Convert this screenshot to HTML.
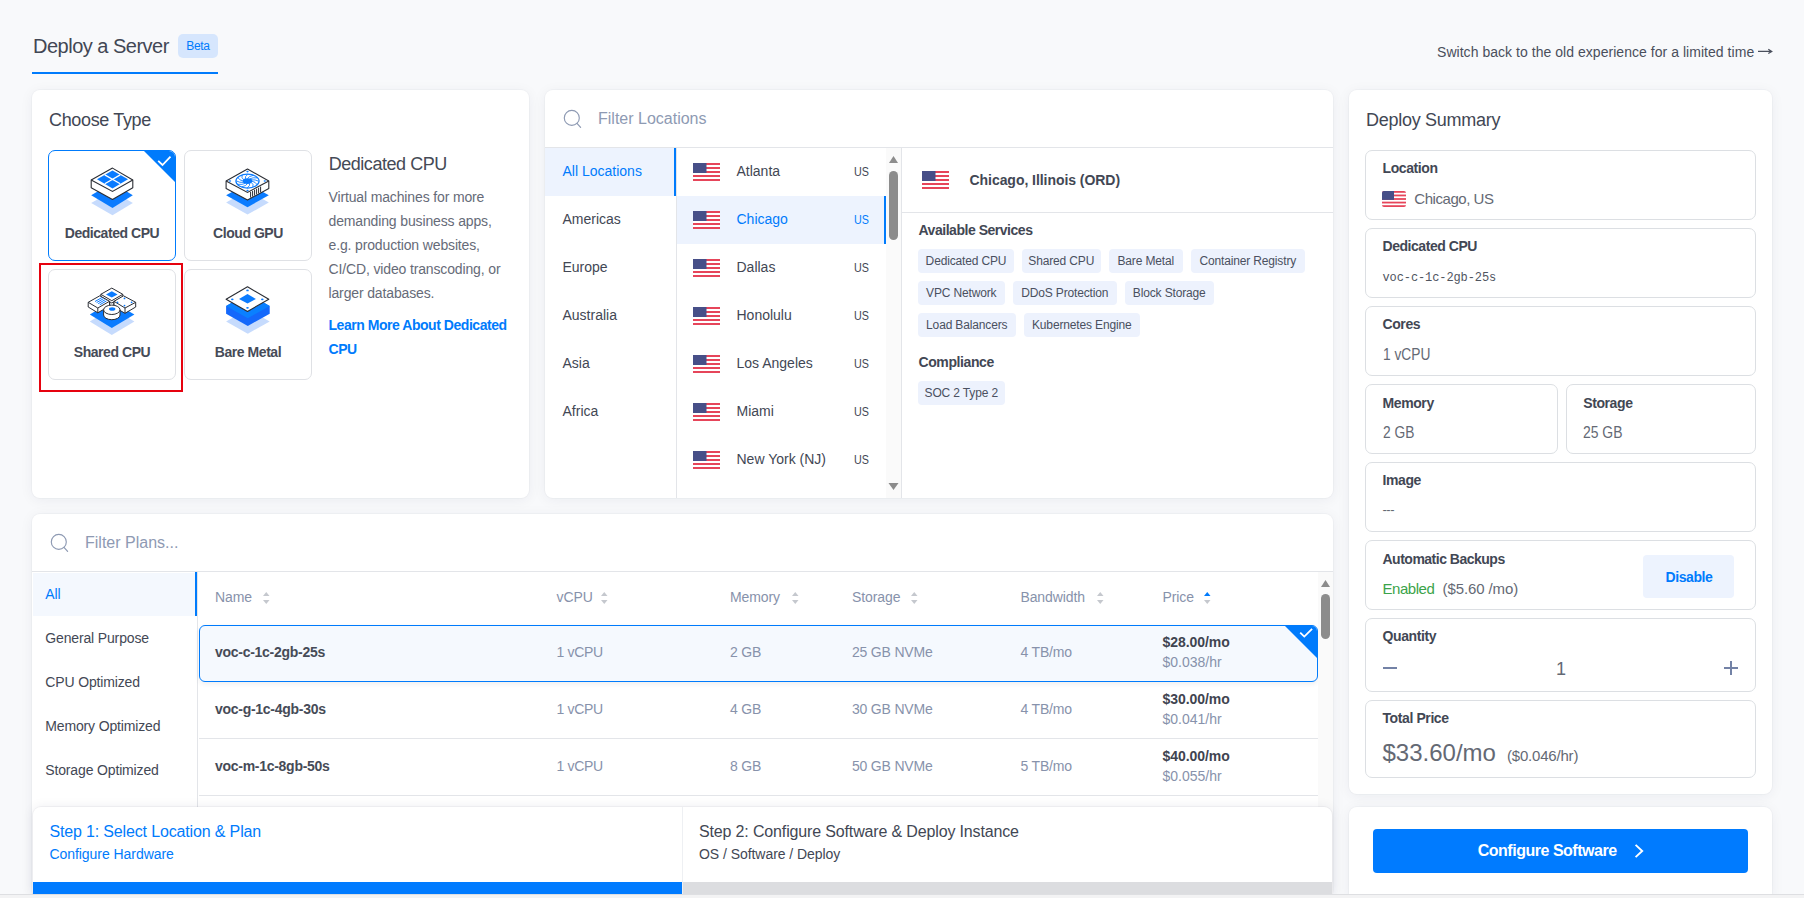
<!DOCTYPE html>
<html><head><meta charset="utf-8"><style>
html,body{margin:0;padding:0;}
body{width:1804px;height:898px;overflow:hidden;position:relative;background:#f8f9fb;font-family:"Liberation Sans",sans-serif;}
.t{position:absolute;white-space:nowrap;}
.r{position:absolute;box-sizing:border-box;}
svg{position:absolute;overflow:visible;}
</style></head><body>
<div class="t" style="left:33px;top:36.07px;font-size:20px;line-height:20px;color:#424754;letter-spacing:-0.5px;">Deploy a Server</div>
<div class="r" style="left:178px;top:34px;width:40px;height:24px;background:#d6e6fd;border-radius:5px"></div>
<div class="t" style="left:186.2px;top:39.64px;font-size:12px;line-height:12px;color:#007bfc;letter-spacing:-0.3px;">Beta</div>
<div class="r" style="left:32px;top:72px;width:186px;height:2px;background:#007bfc"></div>
<div class="t" style="left:1437px;top:45.15px;font-size:14px;line-height:14px;color:#4a4f5c;letter-spacing:0.04px;">Switch back to the old experience for a limited time</div>
<svg style="left:1756px;top:46px" width="18" height="10" viewBox="0 0 18 10"><path d="M2,5.4 L15.6,5.4 M12.3,3.2 L15.8,5.4 L12.3,7.6" fill="none" stroke="#4a4f5c" stroke-width="1.2"/></svg>
<div class="r" style="left:32px;top:90px;width:497px;height:408px;background:#fff;border-radius:8px;box-shadow:0 0 0 1px rgba(20,30,60,0.025),0 2px 14px rgba(20,30,60,0.06)"></div>
<div class="r" style="left:545px;top:90px;width:788px;height:408px;background:#fff;border-radius:8px;box-shadow:0 0 0 1px rgba(20,30,60,0.025),0 2px 14px rgba(20,30,60,0.06)"></div>
<div class="r" style="left:1349px;top:90px;width:423px;height:704px;background:#fff;border-radius:8px;box-shadow:0 0 0 1px rgba(20,30,60,0.025),0 2px 14px rgba(20,30,60,0.06)"></div>
<div class="r" style="left:32px;top:514px;width:1301px;height:384px;background:#fff;border-radius:8px;box-shadow:0 0 0 1px rgba(20,30,60,0.025),0 2px 14px rgba(20,30,60,0.06)"></div>
<div class="t" style="left:49px;top:111.16px;font-size:18px;line-height:18px;color:#424754;letter-spacing:-0.35px;">Choose Type</div>
<div class="r" style="left:48px;top:150px;width:128px;height:111px;border:1px solid #007bfc;border-radius:7px;overflow:hidden;background:#fff"><svg style="left:94px;top:-1px" width="34" height="34" viewBox="0 0 34 34"><polygon points="0,0 34,0 34,34" fill="#007bfc"/><path d="M15.2,10.9 L19.5,15 L27.5,6.6" fill="none" stroke="#fff" stroke-width="1.8"/></svg></div>
<div class="r" style="left:184px;top:150px;width:128px;height:111px;border:1px solid #dfe1e5;border-radius:7px;background:#fff"></div>
<div class="r" style="left:48px;top:269px;width:128px;height:111px;border:1px solid #dfe1e5;border-radius:7px;background:#fff"></div>
<div class="r" style="left:184px;top:269px;width:128px;height:111px;border:1px solid #dfe1e5;border-radius:7px;background:#fff"></div>
<div class="r" style="left:39px;top:263px;width:144px;height:129px;border:2px solid #e6020f"></div>
<svg style="left:86px;top:162px" width="56" height="58" viewBox="0 0 56 58">
<polygon points="5.2,41 26.5,28.7 46.8,41 26.5,53.3" fill="#c6dbfd"/>
<polygon points="5.2,33.3 26.5,20.7 46.8,33.3 26.5,45.9" fill="#0a7bff"/>
<path d="M5.2,18 L26.5,6.1 L46.8,18 L46.8,25.7 L26.5,37.4 L5.2,25.7 Z" fill="#fff" stroke="#2b2e35" stroke-width="1.1" stroke-linejoin="round"/>
<path d="M5.2,18 L26.5,29.4 L46.8,18" fill="none" stroke="#2b2e35" stroke-width="1.1"/>
<polygon points="26.5,8.6 42,17.2 26.5,26.4 11,17.2" fill="#0a7bff"/>
<path d="M18.75,12.9 L34.25,21.8 M34.25,12.9 L18.75,21.8" stroke="#fff" stroke-width="1.3"/>
</svg>
<svg style="left:222px;top:162px" width="56" height="58" viewBox="0 0 56 58">
<polygon points="4.1,40.4 25.5,28.2 46.8,40.4 25.5,52.6" fill="#c6dbfd"/>
<polygon points="4.1,33.3 25.5,21.4 46.8,33.3 25.5,45.2" fill="#0a7bff"/>
<path d="M4.1,19 L25.5,7.1 L46.8,19 L46.8,26.5 L25.5,38.1 L4.1,26.5 Z" fill="#fff" stroke="#2b2e35" stroke-width="1.1" stroke-linejoin="round"/>
<path d="M4.1,19 L25.5,30.4 L46.8,19" fill="none" stroke="#2b2e35" stroke-width="1.1"/>
<path d="M28.6,29.9 L28.6,35.6 M30.6,28.9 L30.6,34.6 M32.6,27.8 L32.6,33.5 M34.6,26.7 L34.6,32.4 M36.6,25.7 L36.6,31.4 M38.6,24.6 L38.6,30.3 " stroke="#2b2e35" stroke-width="1"/>
<ellipse cx="25.5" cy="19.1" rx="11.6" ry="7" fill="none" stroke="#0a7bff" stroke-width="1.2"/><path d="M29.70,19.10 Q33.61,19.83 35.13,22.65 M29.14,20.35 Q31.91,22.16 30.89,25.08 M27.60,21.27 Q28.49,23.66 25.20,25.90 M25.50,21.60 Q24.27,23.94 19.59,24.90 M23.40,21.27 Q20.38,22.93 15.57,22.34 M21.86,20.35 Q17.87,20.89 14.20,18.92 M21.30,19.10 Q17.39,18.37 15.87,15.55 M21.86,17.85 Q19.09,16.04 20.11,13.12 M23.40,16.93 Q22.51,14.54 25.80,12.30 M25.50,16.60 Q26.73,14.26 31.41,13.30 M27.60,16.93 Q30.62,15.27 35.43,15.86 M29.14,17.85 Q33.13,17.31 36.80,19.28 " fill="none" stroke="#0a7bff" stroke-width="0.85"/><ellipse cx="25.5" cy="19.1" rx="4.8" ry="2.8" fill="#0a7bff"/>
<ellipse cx="25.5" cy="9.6" rx="1.2" ry="0.8" fill="#0a7bff"/>
<ellipse cx="8" cy="19" rx="1.2" ry="0.8" fill="#0a7bff"/>
<ellipse cx="42.8" cy="19" rx="1.2" ry="0.8" fill="#0a7bff"/>
<ellipse cx="25.5" cy="28.6" rx="1.2" ry="0.8" fill="#0a7bff"/>
</svg>
<svg style="left:84px;top:282px" width="56" height="58" viewBox="0 0 56 58">
<polygon points="5.8,39.4 27.8,26 50.4,39.4 27.8,53" fill="#c6dbfd"/>
<polygon points="5.8,32.6 27.8,19.3 50.4,32.6 27.8,45.9" fill="#0a7bff"/>
<polygon points="22,17 34,17 36,26 20,26" fill="#fff"/>
<path d="M25.8,19.5 L25.8,23.5 M29.8,19.5 L29.8,23.5" stroke="#2b2e35" stroke-width="0.9"/>
<path d="M16.8,12.3 L27.8,6.1 L38.8,12.3 L38.8,14.6 L27.8,21 L16.8,14.6 Z" fill="#fff" stroke="#2b2e35" stroke-width="1"/>
<path d="M16.8,12.3 L27.8,18.7 L38.8,12.3" fill="none" stroke="#2b2e35" stroke-width="1"/>
<polygon points="27.8,9.2 33.6,12.4 27.8,15.6 22,12.4" fill="#0a7bff"/>
<path d="M4.2,20.3 L15.8,13.8 L25.5,19.3 L25.5,24 L13.8,30.8 L4.2,25 Z" fill="#fff" stroke="#2b2e35" stroke-width="1"/>
<path d="M4.2,20.3 L13.8,26 L25.5,19.3 M13.8,26 L13.8,30.8" fill="none" stroke="#2b2e35" stroke-width="1"/>
<path d="M11,19.5 L18,15.5 M12.6,20.6 L19.6,16.6 M14.2,21.7 L21.2,17.7 M15.8,22.8 L22.6,18.8" stroke="#0a7bff" stroke-width="1"/>
<path d="M30,19.3 L39.5,13.8 L51.7,20.3 L51.7,25 L41,31.3 L30,25 Z" fill="#fff" stroke="#2b2e35" stroke-width="1"/>
<path d="M30,19.3 L41,26 L51.7,20.3 M41,26 L41,31.3" fill="none" stroke="#2b2e35" stroke-width="1"/>
<circle cx="40.5" cy="16.4" r="0.9" fill="#0a7bff"/><circle cx="33.5" cy="20.3" r="0.9" fill="#0a7bff"/><circle cx="47.6" cy="20.3" r="0.9" fill="#0a7bff"/><circle cx="40.5" cy="23.6" r="0.9" fill="#0a7bff"/>
<path d="M19.6,27.8 L19.6,33 A8.2,4.7 0 0 0 36,33 L36,27.8" fill="#fff" stroke="#2b2e35" stroke-width="1"/>
<ellipse cx="27.8" cy="27.8" rx="8.2" ry="4.7" fill="#fff" stroke="#2b2e35" stroke-width="1"/>
<ellipse cx="28.2" cy="27" rx="3.2" ry="1.8" fill="#0a7bff"/>
</svg>
<svg style="left:220px;top:282px" width="56" height="58" viewBox="0 0 56 58">
<polygon points="6.1,39.4 27.8,27 49.7,39.4 27.8,51.7" fill="#c6dbfd"/>
<polygon points="6.1,23.9 27.8,11.6 49.7,23.9 49.7,31.7 27.8,43.9 6.1,31.7" fill="#1468fb"/>
<polygon points="6.1,23.9 27.8,11.6 49.7,23.9 27.8,36.2" fill="#0a80ff"/>
<polygon points="27.5,4.8 48.8,17.3 27.5,29.4 6.1,17.3" fill="#fff" stroke="#2b2e35" stroke-width="1.1" stroke-linejoin="round"/>
<polygon points="27.5,11.9 35.9,16.9 27.5,21.4 19,16.9" fill="#0a7bff"/>
<ellipse cx="27.5" cy="8.4" rx="1.3" ry="0.9" fill="#0a7bff"/>
<ellipse cx="12.3" cy="17.3" rx="1.3" ry="0.9" fill="#0a7bff"/>
<ellipse cx="42.3" cy="17.3" rx="1.3" ry="0.9" fill="#0a7bff"/>
<ellipse cx="27.5" cy="25.8" rx="1.3" ry="0.9" fill="#0a7bff"/>
</svg>
<div class="t" style="left:12px;width:200px;text-align:center;top:225.85px;font-size:14px;line-height:14px;color:#464b57;font-weight:700;letter-spacing:-0.45px">Dedicated CPU</div>
<div class="t" style="left:148px;width:200px;text-align:center;top:225.85px;font-size:14px;line-height:14px;color:#464b57;font-weight:700;letter-spacing:-0.45px">Cloud GPU</div>
<div class="t" style="left:12px;width:200px;text-align:center;top:344.55px;font-size:14px;line-height:14px;color:#464b57;font-weight:700;letter-spacing:-0.45px">Shared CPU</div>
<div class="t" style="left:148px;width:200px;text-align:center;top:344.55px;font-size:14px;line-height:14px;color:#464b57;font-weight:700;letter-spacing:-0.45px">Bare Metal</div>
<div class="t" style="left:328.7px;top:155.16px;font-size:18px;line-height:18px;color:#454a56;letter-spacing:-0.46px;">Dedicated CPU</div>
<div class="t" style="left:328.5px;top:190.15px;font-size:14px;line-height:14px;color:#666b78;letter-spacing:-0.14px;">Virtual machines for more</div>
<div class="t" style="left:328.5px;top:214.15px;font-size:14px;line-height:14px;color:#666b78;letter-spacing:-0.14px;">demanding business apps,</div>
<div class="t" style="left:328.5px;top:238.15px;font-size:14px;line-height:14px;color:#666b78;letter-spacing:-0.14px;">e.g. production websites,</div>
<div class="t" style="left:328.5px;top:262.15px;font-size:14px;line-height:14px;color:#666b78;letter-spacing:-0.14px;">CI/CD, video transcoding, or</div>
<div class="t" style="left:328.5px;top:286.15px;font-size:14px;line-height:14px;color:#666b78;letter-spacing:-0.14px;">larger databases.</div>
<div class="t" style="left:328.5px;top:318.15px;font-size:14px;line-height:14px;color:#007bfc;font-weight:700;letter-spacing:-0.46px;">Learn More About Dedicated</div>
<div class="t" style="left:328.5px;top:342.15px;font-size:14px;line-height:14px;color:#007bfc;font-weight:700;letter-spacing:-0.46px;">CPU</div>
<svg style="left:563.5px;top:110px" width="20" height="20" viewBox="0 0 20 20"><circle cx="7.8" cy="7.9" r="7.5" fill="none" stroke="#8e9ab3" stroke-width="1.15"/><path d="M13,13.4 L16.6,17.4" stroke="#8e9ab3" stroke-width="1.2" stroke-linecap="round"/></svg>
<div class="t" style="left:598px;top:111.26px;font-size:16px;line-height:16px;color:#8e9ab3;">Filter Locations</div>
<div class="r" style="left:545px;top:147px;width:788px;height:1px;background:#e3e5e9"></div>
<div class="r" style="left:545px;top:148px;width:131px;height:48px;background:#edf3fe"></div>
<div class="r" style="left:674px;top:148px;width:2px;height:48px;background:#007bfc"></div>
<div class="r" style="left:676px;top:148px;width:1px;height:350px;background:#e3e5e9"></div>
<div class="t" style="left:562.5px;top:164.15px;font-size:14px;line-height:14px;color:#007bfc;">All Locations</div>
<div class="t" style="left:562.5px;top:212.15px;font-size:14px;line-height:14px;color:#424754;">Americas</div>
<div class="t" style="left:562.5px;top:260.15px;font-size:14px;line-height:14px;color:#424754;">Europe</div>
<div class="t" style="left:562.5px;top:308.15px;font-size:14px;line-height:14px;color:#424754;">Australia</div>
<div class="t" style="left:562.5px;top:356.15px;font-size:14px;line-height:14px;color:#424754;">Asia</div>
<div class="t" style="left:562.5px;top:404.15px;font-size:14px;line-height:14px;color:#424754;">Africa</div>
<div class="r" style="left:677px;top:196px;width:207px;height:48px;background:#edf3fe"></div>
<div class="r" style="left:884px;top:196px;width:2px;height:48px;background:#007bfc"></div>
<svg style="left:693px;top:163px" width="27" height="18" viewBox="0 0 27 18"><defs><clipPath id="fc693_163"><rect width="27" height="18" rx="0"/></clipPath></defs><g clip-path="url(#fc693_163)"><rect width="27" height="18" fill="#fff"/><rect x="0" y="0.00" width="27" height="2.00" fill="#e6455a"/><rect x="0" y="4.00" width="27" height="2.00" fill="#e6455a"/><rect x="0" y="8.00" width="27" height="2.00" fill="#e6455a"/><rect x="0" y="12.00" width="27" height="2.00" fill="#e6455a"/><rect x="0" y="16.00" width="27" height="2.00" fill="#e6455a"/><rect x="0" y="0" width="13.50" height="10.00" fill="#474f88"/></g></svg>
<div class="t" style="left:736.5px;top:164.15px;font-size:14px;line-height:14px;color:#424754;">Atlanta</div>
<div class="t" style="left:853.5px;top:166.22px;font-size:12.5px;line-height:12.5px;color:#424754;transform:scaleX(0.86);transform-origin:0 0;">US</div>
<svg style="left:693px;top:211px" width="27" height="18" viewBox="0 0 27 18"><defs><clipPath id="fc693_211"><rect width="27" height="18" rx="0"/></clipPath></defs><g clip-path="url(#fc693_211)"><rect width="27" height="18" fill="#fff"/><rect x="0" y="0.00" width="27" height="2.00" fill="#e6455a"/><rect x="0" y="4.00" width="27" height="2.00" fill="#e6455a"/><rect x="0" y="8.00" width="27" height="2.00" fill="#e6455a"/><rect x="0" y="12.00" width="27" height="2.00" fill="#e6455a"/><rect x="0" y="16.00" width="27" height="2.00" fill="#e6455a"/><rect x="0" y="0" width="13.50" height="10.00" fill="#474f88"/></g></svg>
<div class="t" style="left:736.5px;top:212.15px;font-size:14px;line-height:14px;color:#007bfc;">Chicago</div>
<div class="t" style="left:853.5px;top:214.22px;font-size:12.5px;line-height:12.5px;color:#007bfc;transform:scaleX(0.86);transform-origin:0 0;">US</div>
<svg style="left:693px;top:259px" width="27" height="18" viewBox="0 0 27 18"><defs><clipPath id="fc693_259"><rect width="27" height="18" rx="0"/></clipPath></defs><g clip-path="url(#fc693_259)"><rect width="27" height="18" fill="#fff"/><rect x="0" y="0.00" width="27" height="2.00" fill="#e6455a"/><rect x="0" y="4.00" width="27" height="2.00" fill="#e6455a"/><rect x="0" y="8.00" width="27" height="2.00" fill="#e6455a"/><rect x="0" y="12.00" width="27" height="2.00" fill="#e6455a"/><rect x="0" y="16.00" width="27" height="2.00" fill="#e6455a"/><rect x="0" y="0" width="13.50" height="10.00" fill="#474f88"/></g></svg>
<div class="t" style="left:736.5px;top:260.15px;font-size:14px;line-height:14px;color:#424754;">Dallas</div>
<div class="t" style="left:853.5px;top:262.22px;font-size:12.5px;line-height:12.5px;color:#424754;transform:scaleX(0.86);transform-origin:0 0;">US</div>
<svg style="left:693px;top:307px" width="27" height="18" viewBox="0 0 27 18"><defs><clipPath id="fc693_307"><rect width="27" height="18" rx="0"/></clipPath></defs><g clip-path="url(#fc693_307)"><rect width="27" height="18" fill="#fff"/><rect x="0" y="0.00" width="27" height="2.00" fill="#e6455a"/><rect x="0" y="4.00" width="27" height="2.00" fill="#e6455a"/><rect x="0" y="8.00" width="27" height="2.00" fill="#e6455a"/><rect x="0" y="12.00" width="27" height="2.00" fill="#e6455a"/><rect x="0" y="16.00" width="27" height="2.00" fill="#e6455a"/><rect x="0" y="0" width="13.50" height="10.00" fill="#474f88"/></g></svg>
<div class="t" style="left:736.5px;top:308.15px;font-size:14px;line-height:14px;color:#424754;">Honolulu</div>
<div class="t" style="left:853.5px;top:310.22px;font-size:12.5px;line-height:12.5px;color:#424754;transform:scaleX(0.86);transform-origin:0 0;">US</div>
<svg style="left:693px;top:355px" width="27" height="18" viewBox="0 0 27 18"><defs><clipPath id="fc693_355"><rect width="27" height="18" rx="0"/></clipPath></defs><g clip-path="url(#fc693_355)"><rect width="27" height="18" fill="#fff"/><rect x="0" y="0.00" width="27" height="2.00" fill="#e6455a"/><rect x="0" y="4.00" width="27" height="2.00" fill="#e6455a"/><rect x="0" y="8.00" width="27" height="2.00" fill="#e6455a"/><rect x="0" y="12.00" width="27" height="2.00" fill="#e6455a"/><rect x="0" y="16.00" width="27" height="2.00" fill="#e6455a"/><rect x="0" y="0" width="13.50" height="10.00" fill="#474f88"/></g></svg>
<div class="t" style="left:736.5px;top:356.15px;font-size:14px;line-height:14px;color:#424754;">Los Angeles</div>
<div class="t" style="left:853.5px;top:358.22px;font-size:12.5px;line-height:12.5px;color:#424754;transform:scaleX(0.86);transform-origin:0 0;">US</div>
<svg style="left:693px;top:403px" width="27" height="18" viewBox="0 0 27 18"><defs><clipPath id="fc693_403"><rect width="27" height="18" rx="0"/></clipPath></defs><g clip-path="url(#fc693_403)"><rect width="27" height="18" fill="#fff"/><rect x="0" y="0.00" width="27" height="2.00" fill="#e6455a"/><rect x="0" y="4.00" width="27" height="2.00" fill="#e6455a"/><rect x="0" y="8.00" width="27" height="2.00" fill="#e6455a"/><rect x="0" y="12.00" width="27" height="2.00" fill="#e6455a"/><rect x="0" y="16.00" width="27" height="2.00" fill="#e6455a"/><rect x="0" y="0" width="13.50" height="10.00" fill="#474f88"/></g></svg>
<div class="t" style="left:736.5px;top:404.15px;font-size:14px;line-height:14px;color:#424754;">Miami</div>
<div class="t" style="left:853.5px;top:406.22px;font-size:12.5px;line-height:12.5px;color:#424754;transform:scaleX(0.86);transform-origin:0 0;">US</div>
<svg style="left:693px;top:451px" width="27" height="18" viewBox="0 0 27 18"><defs><clipPath id="fc693_451"><rect width="27" height="18" rx="0"/></clipPath></defs><g clip-path="url(#fc693_451)"><rect width="27" height="18" fill="#fff"/><rect x="0" y="0.00" width="27" height="2.00" fill="#e6455a"/><rect x="0" y="4.00" width="27" height="2.00" fill="#e6455a"/><rect x="0" y="8.00" width="27" height="2.00" fill="#e6455a"/><rect x="0" y="12.00" width="27" height="2.00" fill="#e6455a"/><rect x="0" y="16.00" width="27" height="2.00" fill="#e6455a"/><rect x="0" y="0" width="13.50" height="10.00" fill="#474f88"/></g></svg>
<div class="t" style="left:736.5px;top:452.15px;font-size:14px;line-height:14px;color:#424754;">New York (NJ)</div>
<div class="t" style="left:853.5px;top:454.22px;font-size:12.5px;line-height:12.5px;color:#424754;transform:scaleX(0.86);transform-origin:0 0;">US</div>
<div class="r" style="left:886px;top:148px;width:15px;height:350px;background:#fafafa"></div>
<svg style="left:886px;top:150px" width="15" height="348" viewBox="0 0 15 348"><polygon points="3,13 12,13 7.5,6" fill="#8c8c8c"/><rect x="3" y="21" width="9" height="69" rx="4.5" fill="#8c8c8c"/><polygon points="2.5,333 12.5,333 7.5,340" fill="#8c8c8c"/></svg>
<div class="r" style="left:901px;top:148px;width:1px;height:350px;background:#e3e5e9"></div>
<svg style="left:922px;top:171px" width="27" height="18" viewBox="0 0 27 18"><defs><clipPath id="fc922_171"><rect width="27" height="18" rx="0"/></clipPath></defs><g clip-path="url(#fc922_171)"><rect width="27" height="18" fill="#fff"/><rect x="0" y="0.00" width="27" height="2.00" fill="#e6455a"/><rect x="0" y="4.00" width="27" height="2.00" fill="#e6455a"/><rect x="0" y="8.00" width="27" height="2.00" fill="#e6455a"/><rect x="0" y="12.00" width="27" height="2.00" fill="#e6455a"/><rect x="0" y="16.00" width="27" height="2.00" fill="#e6455a"/><rect x="0" y="0" width="13.50" height="10.00" fill="#474f88"/></g></svg>
<div class="t" style="left:969.5px;top:173.15px;font-size:14px;line-height:14px;color:#424754;font-weight:700;letter-spacing:-0.05px;">Chicago, Illinois (ORD)</div>
<div class="r" style="left:902px;top:212px;width:431px;height:1px;background:#e3e5e9"></div>
<div class="t" style="left:918.5px;top:222.85px;font-size:14px;line-height:14px;color:#424754;font-weight:700;letter-spacing:-0.47px;">Available Services</div>
<div class="r" style="left:918px;top:249px;width:96px;height:24px;background:#edf2fd;border-radius:4px"></div>
<div class="t" style="left:918px;width:96px;text-align:center;top:255.34px;font-size:12px;line-height:12px;color:#4a5060;letter-spacing:-0.15px">Dedicated CPU</div>
<div class="r" style="left:1022px;top:249px;width:78.5px;height:24px;background:#edf2fd;border-radius:4px"></div>
<div class="t" style="left:1022px;width:78.5px;text-align:center;top:255.34px;font-size:12px;line-height:12px;color:#4a5060;letter-spacing:-0.15px">Shared CPU</div>
<div class="r" style="left:1109px;top:249px;width:73.5px;height:24px;background:#edf2fd;border-radius:4px"></div>
<div class="t" style="left:1109px;width:73.5px;text-align:center;top:255.34px;font-size:12px;line-height:12px;color:#4a5060;letter-spacing:-0.15px">Bare Metal</div>
<div class="r" style="left:1191px;top:249px;width:113.5px;height:24px;background:#edf2fd;border-radius:4px"></div>
<div class="t" style="left:1191px;width:113.5px;text-align:center;top:255.34px;font-size:12px;line-height:12px;color:#4a5060;letter-spacing:-0.15px">Container Registry</div>
<div class="r" style="left:918px;top:281px;width:86.5px;height:24px;background:#edf2fd;border-radius:4px"></div>
<div class="t" style="left:918px;width:86.5px;text-align:center;top:287.34px;font-size:12px;line-height:12px;color:#4a5060;letter-spacing:-0.15px">VPC Network</div>
<div class="r" style="left:1013px;top:281px;width:103.5px;height:24px;background:#edf2fd;border-radius:4px"></div>
<div class="t" style="left:1013px;width:103.5px;text-align:center;top:287.34px;font-size:12px;line-height:12px;color:#4a5060;letter-spacing:-0.15px">DDoS Protection</div>
<div class="r" style="left:1125px;top:281px;width:88.5px;height:24px;background:#edf2fd;border-radius:4px"></div>
<div class="t" style="left:1125px;width:88.5px;text-align:center;top:287.34px;font-size:12px;line-height:12px;color:#4a5060;letter-spacing:-0.15px">Block Storage</div>
<div class="r" style="left:918px;top:313px;width:97.5px;height:24px;background:#edf2fd;border-radius:4px"></div>
<div class="t" style="left:918px;width:97.5px;text-align:center;top:319.34px;font-size:12px;line-height:12px;color:#4a5060;letter-spacing:-0.15px">Load Balancers</div>
<div class="r" style="left:1024px;top:313px;width:115.5px;height:24px;background:#edf2fd;border-radius:4px"></div>
<div class="t" style="left:1024px;width:115.5px;text-align:center;top:319.34px;font-size:12px;line-height:12px;color:#4a5060;letter-spacing:-0.15px">Kubernetes Engine</div>
<div class="t" style="left:918.5px;top:354.95px;font-size:14px;line-height:14px;color:#424754;font-weight:700;letter-spacing:-0.4px;">Compliance</div>
<div class="r" style="left:918px;top:381px;width:86.5px;height:24px;background:#edf2fd;border-radius:4px"></div>
<div class="t" style="left:918px;width:86.5px;text-align:center;top:387.34px;font-size:12px;line-height:12px;color:#4a5060;letter-spacing:-0.15px">SOC 2 Type 2</div>
<div class="t" style="left:1366px;top:110.76px;font-size:18px;line-height:18px;color:#424754;letter-spacing:-0.28px;">Deploy Summary</div>
<div class="r" style="left:1365px;top:150px;width:391px;height:70px;border:1px solid #dcdfe3;border-radius:7px;background:#fff"></div>
<div class="t" style="left:1382.5px;top:160.85px;font-size:14px;line-height:14px;color:#424754;font-weight:700;letter-spacing:-0.4px;">Location</div>
<svg style="left:1382px;top:191px" width="24" height="16" viewBox="0 0 24 16"><defs><clipPath id="fc1382_191"><rect width="24" height="16" rx="2"/></clipPath></defs><g clip-path="url(#fc1382_191)"><rect width="24" height="16" fill="#fff"/><rect x="0" y="0.00" width="24" height="1.78" fill="#e6455a"/><rect x="0" y="3.56" width="24" height="1.78" fill="#e6455a"/><rect x="0" y="7.11" width="24" height="1.78" fill="#e6455a"/><rect x="0" y="10.67" width="24" height="1.78" fill="#e6455a"/><rect x="0" y="14.22" width="24" height="1.78" fill="#e6455a"/><rect x="0" y="0" width="12.00" height="8.89" fill="#474f88"/></g></svg>
<div class="t" style="left:1414.3px;top:190.50px;font-size:15px;line-height:15px;color:#646974;letter-spacing:-0.45px;">Chicago, US</div>
<div class="r" style="left:1365px;top:228px;width:391px;height:70px;border:1px solid #dcdfe3;border-radius:7px;background:#fff"></div>
<div class="t" style="left:1382.5px;top:238.85px;font-size:14px;line-height:14px;color:#424754;font-weight:700;letter-spacing:-0.45px;">Dedicated CPU</div>
<div class="t" style="left:1382.5px;top:271.84px;font-size:12px;line-height:12px;color:#50555f;letter-spacing:-0.1px;font-family:'Liberation Mono',monospace;">voc-c-1c-2gb-25s</div>
<div class="r" style="left:1365px;top:306px;width:391px;height:70px;border:1px solid #dcdfe3;border-radius:7px;background:#fff"></div>
<div class="t" style="left:1382.5px;top:317.05px;font-size:14px;line-height:14px;color:#424754;font-weight:700;letter-spacing:-0.4px;">Cores</div>
<div class="t" style="left:1382.5px;top:347.16px;font-size:16px;line-height:16px;color:#646974;transform:scaleX(0.86);transform-origin:0 0;">1 vCPU</div>
<div class="r" style="left:1365px;top:384px;width:193px;height:70px;border:1px solid #dcdfe3;border-radius:7px;background:#fff"></div>
<div class="t" style="left:1382.5px;top:395.65px;font-size:14px;line-height:14px;color:#424754;font-weight:700;letter-spacing:-0.4px;">Memory</div>
<div class="t" style="left:1382.5px;top:425.06px;font-size:16px;line-height:16px;color:#646974;transform:scaleX(0.86);transform-origin:0 0;">2 GB</div>
<div class="r" style="left:1566px;top:384px;width:190px;height:70px;border:1px solid #dcdfe3;border-radius:7px;background:#fff"></div>
<div class="t" style="left:1583.2px;top:395.65px;font-size:14px;line-height:14px;color:#424754;font-weight:700;letter-spacing:-0.4px;">Storage</div>
<div class="t" style="left:1583.2px;top:425.06px;font-size:16px;line-height:16px;color:#646974;transform:scaleX(0.87);transform-origin:0 0;">25 GB</div>
<div class="r" style="left:1365px;top:462px;width:391px;height:70px;border:1px solid #dcdfe3;border-radius:7px;background:#fff"></div>
<div class="t" style="left:1382.5px;top:472.75px;font-size:14px;line-height:14px;color:#424754;font-weight:700;letter-spacing:-0.4px;">Image</div>
<div class="t" style="left:1382.5px;top:503.00px;font-size:13px;line-height:13px;color:#646974;letter-spacing:-0.5px;">---</div>
<div class="r" style="left:1365px;top:540px;width:391px;height:70px;border:1px solid #dcdfe3;border-radius:7px;background:#fff"></div>
<div class="t" style="left:1382.5px;top:551.55px;font-size:14px;line-height:14px;color:#424754;font-weight:700;letter-spacing:-0.5px;">Automatic Backups</div>
<div class="t" style="left:1382.5px;top:580.90px;font-size:15px;line-height:15px;color:#3ba34a;letter-spacing:-0.45px;">Enabled</div>
<div class="t" style="left:1442.5px;top:580.90px;font-size:15px;line-height:15px;color:#646974;letter-spacing:-0.1px;">($5.60 /mo)</div>
<div class="r" style="left:1643px;top:555px;width:91px;height:43px;background:#edf3fe;border-radius:4px"></div>
<div class="t" style="left:1665.5px;top:570.35px;font-size:14px;line-height:14px;color:#007bfc;font-weight:700;letter-spacing:-0.4px;">Disable</div>
<div class="r" style="left:1365px;top:618px;width:391px;height:74px;border:1px solid #dcdfe3;border-radius:7px;background:#fff"></div>
<div class="t" style="left:1382.5px;top:629.15px;font-size:14px;line-height:14px;color:#424754;font-weight:700;letter-spacing:-0.4px;">Quantity</div>
<div class="r" style="left:1383px;top:667px;width:14px;height:2px;background:#7382a6"></div>
<div class="t" style="left:1556px;top:660.06px;font-size:18px;line-height:18px;color:#646974;">1</div>
<div class="r" style="left:1724px;top:667px;width:14px;height:2px;background:#7382a6"></div>
<div class="r" style="left:1730px;top:661px;width:2px;height:14px;background:#7382a6"></div>
<div class="r" style="left:1365px;top:700px;width:391px;height:78px;border:1px solid #dcdfe3;border-radius:7px;background:#fff"></div>
<div class="t" style="left:1382.5px;top:710.95px;font-size:14px;line-height:14px;color:#424754;font-weight:700;letter-spacing:-0.4px;">Total Price</div>
<div class="t" style="left:1382.5px;top:740.68px;font-size:24px;line-height:24px;color:#646974;">$33.60/mo</div>
<div class="t" style="left:1507px;top:748.30px;font-size:15px;line-height:15px;color:#646974;letter-spacing:-0.2px;">($0.046/hr)</div>
<div class="r" style="left:1349px;top:807px;width:423px;height:91px;background:#fff;border-radius:8px;box-shadow:0 0 0 1px rgba(20,30,60,0.025),0 2px 14px rgba(20,30,60,0.06);border-radius:8px 8px 0 0"></div>
<div class="r" style="left:1373px;top:829px;width:375px;height:44px;background:#007bff;border-radius:4px"></div>
<div class="t" style="left:1477.7px;top:842.66px;font-size:16px;line-height:16px;color:#fff;font-weight:700;letter-spacing:-0.48px;">Configure Software</div>
<svg style="left:1633px;top:844px" width="12" height="14" viewBox="0 0 12 14"><path d="M2.6,0.9 L9.2,7 L2.6,13.1" fill="none" stroke="#fff" stroke-width="1.9"/></svg>
<svg style="left:50.5px;top:534px" width="20" height="20" viewBox="0 0 20 20"><circle cx="7.8" cy="7.9" r="7.5" fill="none" stroke="#8e9ab3" stroke-width="1.15"/><path d="M13,13.4 L16.6,17.4" stroke="#8e9ab3" stroke-width="1.2" stroke-linecap="round"/></svg>
<div class="t" style="left:85px;top:535.26px;font-size:16px;line-height:16px;color:#8e9ab3;">Filter Plans...</div>
<div class="r" style="left:32px;top:571px;width:1301px;height:1px;background:#e3e5e9"></div>
<div class="r" style="left:33px;top:572.5px;width:162px;height:43.5px;background:#f4f8fe"></div>
<div class="r" style="left:195px;top:572px;width:2px;height:44px;background:#007bfc"></div>
<div class="r" style="left:197px;top:572px;width:1px;height:326px;background:#e3e5e9"></div>
<div class="t" style="left:45.3px;top:587.15px;font-size:14px;line-height:14px;color:#007bfc;letter-spacing:-0.15px;">All</div>
<div class="t" style="left:45.3px;top:631.15px;font-size:14px;line-height:14px;color:#434855;letter-spacing:-0.15px;">General Purpose</div>
<div class="t" style="left:45.3px;top:675.15px;font-size:14px;line-height:14px;color:#434855;letter-spacing:-0.15px;">CPU Optimized</div>
<div class="t" style="left:45.3px;top:719.15px;font-size:14px;line-height:14px;color:#434855;letter-spacing:-0.15px;">Memory Optimized</div>
<div class="t" style="left:45.3px;top:763.15px;font-size:14px;line-height:14px;color:#434855;letter-spacing:-0.15px;">Storage Optimized</div>
<div class="t" style="left:215px;top:589.75px;font-size:14px;line-height:14px;color:#8792ab;letter-spacing:-0.1px;">Name</div>
<svg style="left:263px;top:592px" width="7" height="12" viewBox="0 0 7 12"><polygon points="0,4 3.25,0 6.5,4" fill="#c5c8ce"/><polygon points="0,8 6.5,8 3.25,12" fill="#c5c8ce"/></svg>
<div class="t" style="left:556.5px;top:589.75px;font-size:14px;line-height:14px;color:#8792ab;letter-spacing:-0.1px;">vCPU</div>
<svg style="left:601px;top:592px" width="7" height="12" viewBox="0 0 7 12"><polygon points="0,4 3.25,0 6.5,4" fill="#c5c8ce"/><polygon points="0,8 6.5,8 3.25,12" fill="#c5c8ce"/></svg>
<div class="t" style="left:730px;top:589.75px;font-size:14px;line-height:14px;color:#8792ab;letter-spacing:-0.1px;">Memory</div>
<svg style="left:791.7px;top:592px" width="7" height="12" viewBox="0 0 7 12"><polygon points="0,4 3.25,0 6.5,4" fill="#c5c8ce"/><polygon points="0,8 6.5,8 3.25,12" fill="#c5c8ce"/></svg>
<div class="t" style="left:852px;top:589.75px;font-size:14px;line-height:14px;color:#8792ab;letter-spacing:-0.1px;">Storage</div>
<svg style="left:910.7px;top:592px" width="7" height="12" viewBox="0 0 7 12"><polygon points="0,4 3.25,0 6.5,4" fill="#c5c8ce"/><polygon points="0,8 6.5,8 3.25,12" fill="#c5c8ce"/></svg>
<div class="t" style="left:1020.4px;top:589.75px;font-size:14px;line-height:14px;color:#8792ab;letter-spacing:-0.1px;">Bandwidth</div>
<svg style="left:1096.7px;top:592px" width="7" height="12" viewBox="0 0 7 12"><polygon points="0,4 3.25,0 6.5,4" fill="#c5c8ce"/><polygon points="0,8 6.5,8 3.25,12" fill="#c5c8ce"/></svg>
<div class="t" style="left:1162.5px;top:589.75px;font-size:14px;line-height:14px;color:#8792ab;letter-spacing:-0.1px;">Price</div>
<svg style="left:1203.9px;top:592px" width="7" height="12" viewBox="0 0 7 12"><polygon points="0,4 3.25,0 6.5,4" fill="#007bfc"/><polygon points="0,8 6.5,8 3.25,12" fill="#c5c8ce"/></svg>
<div class="r" style="left:199px;top:625px;width:1119px;height:57px;border:1px solid #007bfc;border-radius:6px;background:#f5f9fe;overflow:hidden;box-shadow:0 2px 5px rgba(30,40,70,0.08)"><svg style="left:1084px;top:-1px" width="34" height="34" viewBox="0 0 34 34"><polygon points="0,0 34,0 34,34" fill="#007bfc"/><path d="M16.2,7.6 L20.3,11.6 L28.1,3.8" fill="none" stroke="#fff" stroke-width="1.8"/></svg></div>
<div class="t" style="left:215px;top:644.75px;font-size:14px;line-height:14px;color:#464b57;font-weight:700;letter-spacing:-0.28px;">voc-c-1c-2gb-25s</div>
<div class="t" style="left:556.5px;top:644.75px;font-size:14px;line-height:14px;color:#8792ab;letter-spacing:-0.3px;">1 vCPU</div>
<div class="t" style="left:730px;top:644.75px;font-size:14px;line-height:14px;color:#8792ab;letter-spacing:-0.2px;">2 GB</div>
<div class="t" style="left:852px;top:644.75px;font-size:14px;line-height:14px;color:#8792ab;letter-spacing:-0.2px;">25 GB NVMe</div>
<div class="t" style="left:1020.4px;top:644.75px;font-size:14px;line-height:14px;color:#8792ab;letter-spacing:-0.15px;">4 TB/mo</div>
<div class="t" style="left:1162.5px;top:635.15px;font-size:14px;line-height:14px;color:#3f4450;font-weight:700;letter-spacing:-0.05px;">$28.00/mo</div>
<div class="t" style="left:1162.5px;top:655.15px;font-size:14px;line-height:14px;color:#8792ab;">$0.038/hr</div>
<div class="t" style="left:215px;top:701.75px;font-size:14px;line-height:14px;color:#464b57;font-weight:700;letter-spacing:-0.28px;">voc-g-1c-4gb-30s</div>
<div class="t" style="left:556.5px;top:701.75px;font-size:14px;line-height:14px;color:#8792ab;letter-spacing:-0.3px;">1 vCPU</div>
<div class="t" style="left:730px;top:701.75px;font-size:14px;line-height:14px;color:#8792ab;letter-spacing:-0.2px;">4 GB</div>
<div class="t" style="left:852px;top:701.75px;font-size:14px;line-height:14px;color:#8792ab;letter-spacing:-0.2px;">30 GB NVMe</div>
<div class="t" style="left:1020.4px;top:701.75px;font-size:14px;line-height:14px;color:#8792ab;letter-spacing:-0.15px;">4 TB/mo</div>
<div class="t" style="left:1162.5px;top:692.15px;font-size:14px;line-height:14px;color:#3f4450;font-weight:700;letter-spacing:-0.05px;">$30.00/mo</div>
<div class="t" style="left:1162.5px;top:712.15px;font-size:14px;line-height:14px;color:#8792ab;">$0.041/hr</div>
<div class="r" style="left:199px;top:738px;width:1119px;height:1px;background:#e3e5e9"></div>
<div class="t" style="left:215px;top:758.75px;font-size:14px;line-height:14px;color:#464b57;font-weight:700;letter-spacing:-0.28px;">voc-m-1c-8gb-50s</div>
<div class="t" style="left:556.5px;top:758.75px;font-size:14px;line-height:14px;color:#8792ab;letter-spacing:-0.3px;">1 vCPU</div>
<div class="t" style="left:730px;top:758.75px;font-size:14px;line-height:14px;color:#8792ab;letter-spacing:-0.2px;">8 GB</div>
<div class="t" style="left:852px;top:758.75px;font-size:14px;line-height:14px;color:#8792ab;letter-spacing:-0.2px;">50 GB NVMe</div>
<div class="t" style="left:1020.4px;top:758.75px;font-size:14px;line-height:14px;color:#8792ab;letter-spacing:-0.15px;">5 TB/mo</div>
<div class="t" style="left:1162.5px;top:749.15px;font-size:14px;line-height:14px;color:#3f4450;font-weight:700;letter-spacing:-0.05px;">$40.00/mo</div>
<div class="t" style="left:1162.5px;top:769.15px;font-size:14px;line-height:14px;color:#8792ab;">$0.055/hr</div>
<div class="r" style="left:199px;top:795px;width:1119px;height:1px;background:#e3e5e9"></div>
<div class="t" style="left:215px;top:815.75px;font-size:14px;line-height:14px;color:#464b57;font-weight:700;letter-spacing:-0.28px;">voc-c-2c-4gb-50s</div>
<div class="t" style="left:556.5px;top:815.75px;font-size:14px;line-height:14px;color:#8792ab;letter-spacing:-0.3px;">2 vCPU</div>
<div class="t" style="left:730px;top:815.75px;font-size:14px;line-height:14px;color:#8792ab;letter-spacing:-0.2px;">4 GB</div>
<div class="t" style="left:852px;top:815.75px;font-size:14px;line-height:14px;color:#8792ab;letter-spacing:-0.2px;">50 GB NVMe</div>
<div class="t" style="left:1020.4px;top:815.75px;font-size:14px;line-height:14px;color:#8792ab;letter-spacing:-0.15px;">5 TB/mo</div>
<div class="t" style="left:1162.5px;top:806.15px;font-size:14px;line-height:14px;color:#3f4450;font-weight:700;letter-spacing:-0.05px;">$56.00/mo</div>
<div class="t" style="left:1162.5px;top:826.15px;font-size:14px;line-height:14px;color:#8792ab;">$0.077/hr</div>
<div class="r" style="left:199px;top:852px;width:1119px;height:1px;background:#e3e5e9"></div>
<div class="r" style="left:1318px;top:572px;width:15px;height:326px;background:#fafafa"></div>
<svg style="left:1318px;top:572px" width="15" height="80" viewBox="0 0 15 80"><polygon points="3,15 12,15 7.5,8" fill="#8c8c8c"/><rect x="3" y="22" width="9" height="45" rx="4.5" fill="#8c8c8c"/></svg>
<div class="r" style="left:33px;top:807px;width:1299px;height:87px;background:#fff;border-radius:8px 8px 0 0;box-shadow:0 0 0 1px rgba(20,30,60,0.04),0 0 12px rgba(20,30,60,0.08);overflow:hidden"><div class="r" style="left:0;top:75px;width:649px;height:12px;background:#007bff"></div><div class="r" style="left:649px;top:0;width:1px;height:87px;background:#eef0f3"></div><div class="r" style="left:650px;top:75px;width:649px;height:12px;background:#dcdde0"></div></div>
<div class="t" style="left:49.4px;top:824.26px;font-size:16px;line-height:16px;color:#007bfc;letter-spacing:-0.15px;">Step 1: Select Location &amp; Plan</div>
<div class="t" style="left:49.4px;top:846.95px;font-size:14px;line-height:14px;color:#007bfc;letter-spacing:-0.05px;">Configure Hardware</div>
<div class="t" style="left:699px;top:824.26px;font-size:16px;line-height:16px;color:#424754;letter-spacing:-0.15px;">Step 2: Configure Software &amp; Deploy Instance</div>
<div class="t" style="left:699px;top:846.95px;font-size:14px;line-height:14px;color:#424754;letter-spacing:-0.05px;">OS / Software / Deploy</div>
<div class="r" style="left:0px;top:894px;width:1804px;height:1px;background:#dedfe2"></div>
<div class="r" style="left:0px;top:895px;width:1804px;height:3px;background:#f3f3f4"></div>
</body></html>
